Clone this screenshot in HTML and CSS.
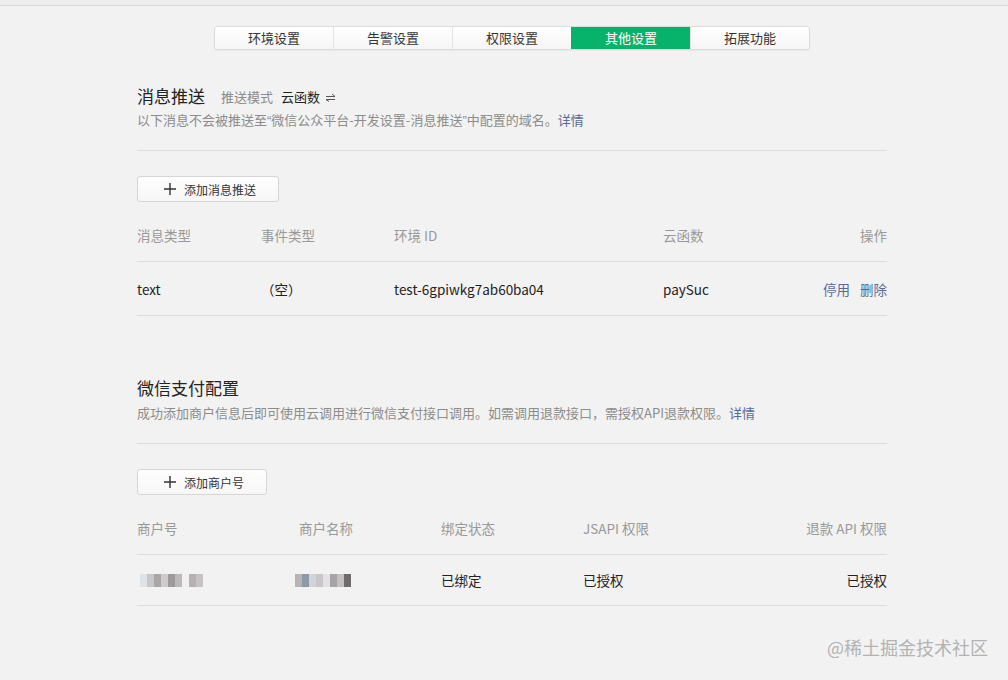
FILE: index.html
```html
<!DOCTYPE html>
<html lang="zh-CN">
<head>
    <meta charset="UTF-8">
    <title>其他设置</title>
    <link rel="stylesheet" href="styles.css">
</head>
<body>
    <div class="topbar"></div>
    <div class="page">
        <div class="tabs">
            <div class="tab">环境设置</div>
            <div class="tab">告警设置</div>
            <div class="tab">权限设置</div>
            <div class="tab active">其他设置</div>
            <div class="tab">拓展功能</div>
        </div>

        <div class="section">
            <div class="section-head">
                <div class="title-line">
                    <span class="title">消息推送</span>
                    <span class="mode-label">推送模式</span>
                    <span class="mode-value">云函数</span>
                    <svg class="switch-icon" width="11" height="9" viewBox="0 0 11 9">
                        <path d="M1 3.5H10L7 1" fill="none" stroke="#555" stroke-width="1"/>
                        <path d="M10 6.5H1L4 8.5" fill="none" stroke="#555" stroke-width="1"/>
                    </svg>
                </div>
                <p class="desc">以下消息不会被推送至<span class="q">“</span>微信公众平台-开发设置-消息推送<span class="q">”</span>中配置的域名。<a class="link">详情</a></p>
            </div>
            <button class="add-btn">
                <svg width="12" height="12" viewBox="0 0 12 12"><path d="M6 0V12M0 6H12" stroke="#333" stroke-width="1.4"/></svg>
                添加消息推送
            </button>
            <div class="table push-table">
                <div class="row head">
                    <span>消息类型</span>
                    <span>事件类型</span>
                    <span>环境 ID</span>
                    <span>云函数</span>
                    <span class="right">操作</span>
                </div>
                <div class="row">
                    <span>text</span>
                    <span>（空）</span>
                    <span>test-6gpiwkg7ab60ba04</span>
                    <span>paySuc</span>
                    <span class="right ops"><a class="link">停用</a><a class="link">删除</a></span>
                </div>
            </div>
        </div>

        <div class="section">
            <div class="section-head">
                <div class="title-line">
                    <span class="title">微信支付配置</span>
                </div>
                <p class="desc">成功添加商户信息后即可使用云调用进行微信支付接口调用。如需调用退款接口，需授权API退款权限。<a class="link">详情</a></p>
            </div>
            <button class="add-btn">
                <svg width="12" height="12" viewBox="0 0 12 12"><path d="M6 0V12M0 6H12" stroke="#333" stroke-width="1.4"/></svg>
                添加商户号
            </button>
            <div class="table pay-table">
                <div class="row head">
                    <span>商户号</span>
                    <span>商户名称</span>
                    <span>绑定状态</span>
                    <span>JSAPI 权限</span>
                    <span class="right">退款 API 权限</span>
                </div>
                <div class="row">
                    <span class="blur blur-id">
                        <i style="background:#dfe3e6"></i><i style="background:#c9c6c8"></i><i style="background:#a9a6a8"></i><i style="background:#cfcacc"></i><i style="background:#9e9a9c"></i><i style="background:#bdb9bb"></i><i style="background:#f0f0f0"></i><i style="background:#b5b0b2"></i><i style="background:#c7c3c4"></i>
                    </span>
                    <span class="blur blur-name">
                        <i style="background:#b9b3b6"></i><i style="background:#8c9aa8"></i><i style="background:#d0d4da"></i><i style="background:#c9c6c9"></i><i style="background:#e2e2e4"></i><i style="background:#a7a4a6"></i><i style="background:#c4c1c3"></i><i style="background:#6f6b6d"></i>
                    </span>
                    <span>已绑定</span>
                    <span>已授权</span>
                    <span class="right">已授权</span>
                </div>
            </div>
        </div>
    </div>
    <div class="watermark">@稀土掘金技术社区</div>
</body>
</html>
```

FILE: styles.css
```css
html, body {
    margin: 0;
    overflow: hidden;
}
body {
    background-color: #f2f2f2;
    font-family: "Noto Sans CJK SC", "Liberation Sans", sans-serif;
    color: #333;
    padding-left: 16px;
    height: 680px;
    position: relative;
}
.topbar {
    height: 5px;
    margin-left: -16px;
    background-color: #eeeeee;
    border-bottom: 1px solid #d9d9d9;
}
.page {
    width: 750px;
    margin: 0 auto;
}
.tabs {
    display: flex;
    width: 596px;
    margin: 20px auto 0;
    border: 1px solid #dcdcdc;
    border-radius: 3px;
    background: linear-gradient(#fefefe, #f6f6f6);
    box-shadow: 0 1px 1px rgba(0, 0, 0, 0.04);
    box-sizing: border-box;
    height: 24px;
    overflow: hidden;
}
.tab {
    flex: 1;
    text-align: center;
    font-size: 13px;
    line-height: 22px;
    color: #353535;
    border-left: 1px solid #e4e4e4;
}
.tab:first-child {
    border-left: none;
}
.tab.active {
    background-color: #07b36b;
    color: #fff;
    border-left-color: #07b36b;
}
.section {
    margin-top: 35px;
}
.section + .section {
    margin-top: 61px;
}
.section-head {
    border-bottom: 1px solid #dcdcdc;
    padding-bottom: 19px;
}
.section + .section .section-head {
    padding-bottom: 20px;
}
.title-line {
    display: flex;
    align-items: center;
    height: 24px;
    line-height: 24px;
}
.title {
    font-size: 17px;
    color: #222;
    margin-top: -3px;
}
.mode-label {
    font-size: 13px;
    color: #8a8a8a;
    margin-left: 16px;
}
.mode-value {
    font-size: 13px;
    color: #222;
    margin-left: 8px;
}
.switch-icon {
    margin-left: 5px;
}
.desc {
    margin: 1px 0 0;
    font-size: 13px;
    line-height: 20px;
    color: #8c8c8c;
}
.section + .section .desc {
    margin-top: 2px;
}
.desc .q {
    font-family: "Liberation Sans", sans-serif;
}
.link {
    color: #576b95;
    cursor: pointer;
}
.add-btn {
    display: flex;
    align-items: center;
    gap: 8px;
    margin-top: 25px;
    height: 26px;
    box-sizing: border-box;
    padding: 0 22px 0 26px;
    border: 1px solid #d6d6d6;
    border-radius: 3px;
    background: linear-gradient(#fefefe, #f7f7f7);
    font-family: inherit;
    font-size: 12px;
    color: #333;
}
.table {
    margin-top: 10px;
}
.row {
    display: grid;
    align-items: center;
    height: 53px;
    border-bottom: 1px solid #dcdcdc;
    font-size: 13.5px;
    color: #222;
}
.row.head {
    height: 45px;
    padding-bottom: 4px;
    color: #999;
}
.pay-table .row:not(.head) {
    height: 50px;
}
.push-table .row {
    grid-template-columns: 124px 133px 269px 1fr auto;
}
.pay-table .row {
    grid-template-columns: 162px 142px 142px 1fr auto;
}
.right {
    text-align: right;
}
.ops .link {
    margin-left: 10px;
}
.blur {
    display: flex;
    align-items: center;
    height: 13px;
}
.blur i {
    display: block;
    width: 7px;
    height: 13px;
}
.blur-id {
    margin-left: 3px;
}
.blur-name {
    margin-left: -4px;
}
.watermark {
    position: absolute;
    right: 20px;
    bottom: 20px;
    font-size: 18px;
    color: #b3b3b3;
}
```
